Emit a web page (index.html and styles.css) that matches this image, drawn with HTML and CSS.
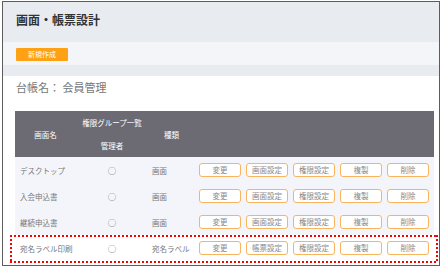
FILE: index.html
```html
<!DOCTYPE html>
<html lang="ja">
<head>
    <meta charset="UTF-8">
    <meta name="viewport" content="width=device-width, initial-scale=1.0">
    <title>画面・帳票設計</title>
    <link rel="stylesheet" href="styles.css">
</head>
<body>
    <div class="frame">
        <div class="page-head">
            <h1>画面・帳票設計</h1>
        </div>
        <div class="toolbar">
            <button class="new-button">新規作成</button>
        </div>
        <div class="strip"></div>
        <p class="ledger">台帳名： 会員管理</p>

        <div class="table-wrap">
            <table class="screens">
                <thead>
                    <tr>
                        <th rowspan="2" class="col-name">画面名</th>
                        <th class="col-perm">権限グループ一覧</th>
                        <th rowspan="2" class="col-kind">種類</th>
                        <th rowspan="2" class="col-actions"></th>
                    </tr>
                    <tr>
                        <th class="col-perm">管理者</th>
                    </tr>
                </thead>
                <tbody>
                    <tr>
                        <td class="name">デスクトップ</td>
                        <td class="mark">○</td>
                        <td class="kind">画面</td>
                        <td class="actions">
                            <button>変更</button><button>画面設定</button><button>権限設定</button><button>複製</button><button>削除</button>
                        </td>
                    </tr>
                    <tr>
                        <td class="name">入会申込書</td>
                        <td class="mark">○</td>
                        <td class="kind">画面</td>
                        <td class="actions">
                            <button>変更</button><button>画面設定</button><button>権限設定</button><button>複製</button><button>削除</button>
                        </td>
                    </tr>
                    <tr>
                        <td class="name">継続申込書</td>
                        <td class="mark">○</td>
                        <td class="kind">画面</td>
                        <td class="actions">
                            <button>変更</button><button>画面設定</button><button>権限設定</button><button>複製</button><button>削除</button>
                        </td>
                    </tr>
                    <tr class="label-row">
                        <td class="name">宛名ラベル印刷</td>
                        <td class="mark">○</td>
                        <td class="kind">宛名ラベル</td>
                        <td class="actions">
                            <button>変更</button><button>帳票設定</button><button>権限設定</button><button>複製</button><button>削除</button>
                        </td>
                    </tr>
                </tbody>
            </table>
            <div class="highlight"></div>
        </div>
    </div>
</body>
</html>
```

FILE: styles.css
```css
body {
    margin: 0;
    font-family: "Noto Sans CJK JP", "Noto Sans", sans-serif;
    background: #fff;
}
.frame {
    position: relative;
    margin: 1px 2px 0;
    height: 265px;
    box-sizing: border-box;
    border: 1px solid #5c5c5c;
    overflow: hidden;
}
.page-head {
    height: 40px;
    box-sizing: border-box;
    padding: 10px 13px 0;
    background: #e8ebf0;
}
.page-head h1 {
    margin: 0;
    font-size: 12px;
    line-height: 15px;
    font-weight: bold;
    color: #333;
}
.toolbar {
    height: 23px;
    box-sizing: border-box;
    padding: 6px 13px 0;
    background: #f4f5f9;
}
.new-button {
    display: block;
    width: 52px;
    height: 13px;
    padding: 0;
    border: none;
    border-radius: 1px;
    background: #ffa114;
    color: #fff;
    font-family: inherit;
    font-size: 7px;
    line-height: 13px;
}
.strip {
    height: 11px;
    background: #e8ebf0;
}
.ledger {
    margin: 5px 0 0 13px;
    font-size: 11px;
    line-height: 13px;
    color: #777;
}
.table-wrap {
    position: relative;
    margin: 17px 0 0 12px;
    width: 419px;
}
.screens {
    width: 419px;
    border-collapse: collapse;
    table-layout: fixed;
    font-size: 7.5px;
}
.screens th {
    height: 23px;
    padding: 0;
    background: #6c6b74;
    color: #fff;
    font-weight: normal;
    text-align: center;
}
.col-name { width: 61px; }
.col-perm { width: 72px; }
.col-kind { width: 47px; }
.screens td {
    height: 26px;
    padding: 0;
    background: #f4f5fa;
    color: #777;
    white-space: nowrap;
}
.screens .label-row td {
    background: #fff;
}
.name {
    padding-left: 5px !important;
}
.mark {
    text-align: center;
    font-size: 8.5px;
    color: #888;
}
.kind {
    padding-left: 4px !important;
}
.actions {
    display: flex;
    align-items: center;
    gap: 5px;
    padding-left: 4px !important;
    box-sizing: border-box;
}
.actions button {
    width: 42px;
    height: 14px;
    padding: 0;
    border: 1px solid #f8b55e;
    border-radius: 3px;
    background: #fff;
    color: #888;
    font-family: inherit;
    font-size: 7.5px;
    line-height: 12px;
}
/* square red dots, drawn as a repeating stripe on each edge */
.highlight {
    position: absolute;
    left: -5px;
    top: 124px;
    width: 428px;
    height: 28px;
    background:
        repeating-linear-gradient(90deg, #f00 0 2px, transparent 2px 4px) top / 100% 2px no-repeat,
        repeating-linear-gradient(90deg, #f00 0 2px, transparent 2px 4px) bottom / 100% 2px no-repeat,
        repeating-linear-gradient(180deg, #f00 0 2px, transparent 2px 4px) left / 2px 100% no-repeat,
        repeating-linear-gradient(180deg, #f00 0 2px, transparent 2px 4px) right / 2px 100% no-repeat;
}
```
